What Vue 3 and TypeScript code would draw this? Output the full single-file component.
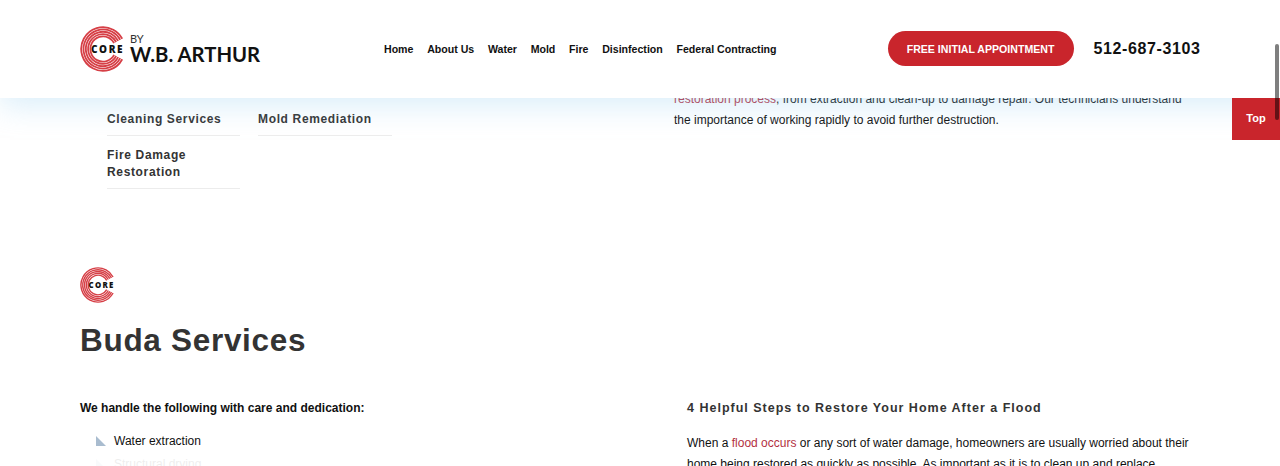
<template>
  <div class="page">
    <header class="site-header">
      <a class="logo">
        <svg class="core-mark" width="46" height="46" viewBox="0 0 46 46">
          <circle
            v-for="r in rings"
            :key="r"
            cx="23"
            cy="23"
            :r="r"
            pathLength="360"
            stroke-dasharray="304 56"
            transform="rotate(28 23 23)"
            class="ring"
          />
          <text x="11" y="26.8" class="core-text">CORE</text>
        </svg>
        <div class="logo-words">
          <span class="by">BY</span>
          <span class="wb">W.B. ARTHUR</span>
        </div>
      </a>
      <nav class="main-nav">
        <a v-for="item in navItems" :key="item">{{ item }}</a>
      </nav>
      <a class="cta">FREE INITIAL APPOINTMENT</a>
      <a class="phone">512-687-3103</a>
    </header>

    <a class="to-top">Top</a>
    <div class="scroll-thumb"></div>

    <section class="intro">
      <div class="service-links">
        <a class="hidden-row"></a>
        <a class="hidden-row"></a>
        <a>Cleaning Services</a>
        <a>Mold Remediation</a>
        <a>Fire Damage Restoration</a>
      </div>
      <div class="intro-copy">
        <p>
          <a class="inline-link">restoration process</a>, from extraction and clean-up to damage repair. Our technicians understand
          the importance of working rapidly to avoid further destruction.
        </p>
      </div>
    </section>

    <section class="services">
      <svg class="core-mark small" width="36" height="36" viewBox="0 0 46 46">
        <circle
          v-for="r in rings"
          :key="r"
          cx="23"
          cy="23"
          :r="r"
          pathLength="360"
          stroke-dasharray="304 56"
          transform="rotate(28 23 23)"
          class="ring"
        />
        <text x="11" y="26.8" class="core-text">CORE</text>
      </svg>
      <h1>Buda Services</h1>
      <div class="columns">
        <div class="col-left">
          <p class="lead">We handle the following with care and dedication:</p>
          <ul>
            <li>Water extraction</li>
            <li class="faded">Structural drying</li>
          </ul>
        </div>
        <div class="col-right">
          <h3>4 Helpful Steps to Restore Your Home After a Flood</h3>
          <p>
            When a <a class="inline-link">flood occurs</a> or any sort of water damage, homeowners are usually worried about their
            home being restored as quickly as possible. As important as it is to clean up and replace
          </p>
        </div>
      </div>
    </section>
  </div>
</template>

<script setup lang="ts">
const navItems: string[] = ['Home', 'About Us', 'Water', 'Mold', 'Fire', 'Disinfection', 'Federal Contracting']

// concentric bands of the C mark, outer to inner
const rings: number[] = [21.8, 19.5, 17.2, 14.9, 12.6]
</script>

<style>
html,
body {
  margin: 0;
  background: #fff;
  overflow: hidden;
}
</style>

<style scoped>
.page {
  position: relative;
  height: 466px;
  overflow: hidden;
  background: #fff;
  color: #111;
  font-family: "Liberation Sans", Arial, sans-serif;
  font-size: 12px;
}

.site-header {
  position: absolute;
  top: 0;
  left: 0;
  right: 0;
  z-index: 5;
  height: 98px;
  box-sizing: border-box;
  padding: 0 80px 1px;
  display: flex;
  align-items: center;
  background: #fff;
  box-shadow: 0 8px 28px rgba(150, 205, 240, 0.35);
}

.logo {
  display: flex;
  align-items: center;
  width: 304px;
  flex-shrink: 0;
  margin-top: 1px;
}

.ring {
  fill: none;
  stroke: #d63f46;
  stroke-width: 1.8;
}

.core-text {
  font-family: "Open Sans", "Liberation Sans", sans-serif;
  font-size: 10px;
  font-weight: 800;
  letter-spacing: 1.6px;
  fill: #111;
}

.logo-words {
  display: flex;
  flex-direction: column;
  margin-left: 4px;
  font-family: Lato, sans-serif;
  color: #111;
}

.by {
  font-size: 11px;
  line-height: 11px;
  color: #333;
}

.wb {
  font-size: 20.3px;
  line-height: 21px;
  font-weight: 700;
  white-space: nowrap;
}

.main-nav {
  display: flex;
  gap: 13.7px;
  font-size: 10.6px;
  font-weight: 700;
  white-space: nowrap;
}

.cta {
  margin-left: 111px;
  width: 186px;
  height: 35px;
  border-radius: 18px;
  background: #c9252c;
  color: #fff;
  font-size: 10.6px;
  font-weight: 700;
  display: flex;
  align-items: center;
  justify-content: center;
  flex-shrink: 0;
}

.phone {
  margin-left: 20px;
  font-size: 16px;
  font-weight: 700;
  letter-spacing: 0.6px;
  white-space: nowrap;
}

.to-top {
  position: absolute;
  top: 98px;
  right: 0;
  z-index: 6;
  width: 48px;
  height: 42px;
  box-sizing: border-box;
  padding-bottom: 2px;
  background: #c9252c;
  color: #fff;
  font-size: 11px;
  font-weight: 700;
  display: flex;
  align-items: center;
  justify-content: center;
}

.scroll-thumb {
  position: absolute;
  top: 44px;
  right: 1px;
  z-index: 7;
  width: 4px;
  height: 76px;
  border-radius: 2px;
  background: rgba(0, 0, 0, 0.5);
}

.intro {
  display: flex;
  padding: 88px 80px 0 107px;
  height: 179px;
}

.service-links {
  width: 285px;
  display: grid;
  grid-template-columns: 133px 134px;
  column-gap: 18px;
  align-content: start;
  font-size: 12px;
  font-weight: 700;
  letter-spacing: 0.65px;
  line-height: 17px;
  color: #333;
}

.service-links a {
  padding: 11px 0 7px;
  border-bottom: 1px solid #ececec;
}

.service-links .hidden-row {
  height: 11px;
  padding: 0;
  border-bottom-color: transparent;
}

.intro-copy {
  margin-left: 282px;
  margin-top: 0.5px;
  width: 520px;
}

.intro-copy p,
.col-right p {
  margin: 0;
  line-height: 21.3px;
}

.inline-link {
  color: #b3303f;
}

.services {
  padding: 0 80px;
}

.core-mark.small {
  display: block;
}

h1 {
  margin: 17px 0 0;
  font-size: 31.5px;
  line-height: 40px;
  font-weight: 700;
  letter-spacing: 0.7px;
  color: #333;
}

.columns {
  display: flex;
  margin-top: 38px;
}

.col-left {
  width: 607px;
  flex-shrink: 0;
}

.lead {
  margin: 0;
  font-weight: 700;
  line-height: 20px;
}

ul {
  list-style: none;
  margin: 13px 0 0;
  padding: 0 0 0 16px;
}

li {
  position: relative;
  padding-left: 18px;
  line-height: 20px;
  margin-bottom: 3px;
}

li::before {
  content: "";
  position: absolute;
  left: 0;
  top: 5px;
  width: 10px;
  height: 10px;
  background: #a9bccf;
  clip-path: polygon(0 0, 100% 100%, 0 100%);
}

li.faded {
  opacity: 0.07;
}

.col-right {
  width: 510px;
}

h3 {
  margin: 0 0 15px;
  font-size: 12.5px;
  line-height: 20px;
  font-weight: 700;
  letter-spacing: 1px;
  color: #333;
}
</style>
